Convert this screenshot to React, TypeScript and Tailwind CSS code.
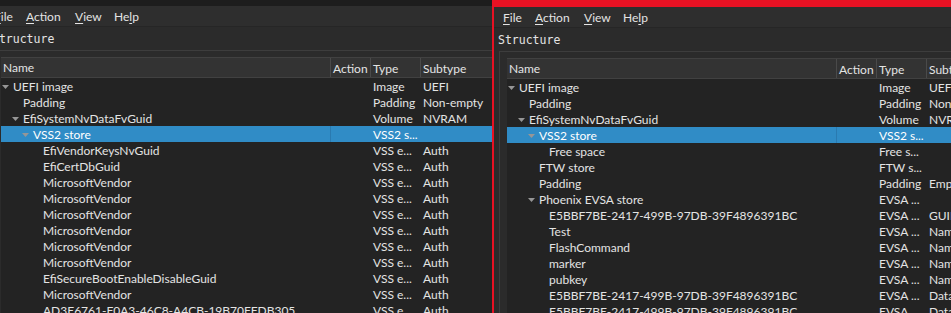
import React from 'react';

type Row = {
  level: number;
  open?: boolean;
  name: string;
  type: string;
  subtype: string;
  selected?: boolean;
};

const leftRows: Row[] = [
  { level: 0, open: true, name: 'UEFI image', type: 'Image', subtype: 'UEFI' },
  { level: 1, name: 'Padding', type: 'Padding', subtype: 'Non-empty' },
  { level: 1, open: true, name: 'EfiSystemNvDataFvGuid', type: 'Volume', subtype: 'NVRAM' },
  { level: 2, open: true, name: 'VSS2 store', type: 'VSS2 s...', subtype: '', selected: true },
  { level: 3, name: 'EfiVendorKeysNvGuid', type: 'VSS e...', subtype: 'Auth' },
  { level: 3, name: 'EfiCertDbGuid', type: 'VSS e...', subtype: 'Auth' },
  { level: 3, name: 'MicrosoftVendor', type: 'VSS e...', subtype: 'Auth' },
  { level: 3, name: 'MicrosoftVendor', type: 'VSS e...', subtype: 'Auth' },
  { level: 3, name: 'MicrosoftVendor', type: 'VSS e...', subtype: 'Auth' },
  { level: 3, name: 'MicrosoftVendor', type: 'VSS e...', subtype: 'Auth' },
  { level: 3, name: 'MicrosoftVendor', type: 'VSS e...', subtype: 'Auth' },
  { level: 3, name: 'MicrosoftVendor', type: 'VSS e...', subtype: 'Auth' },
  { level: 3, name: 'EfiSecureBootEnableDisableGuid', type: 'VSS e...', subtype: 'Auth' },
  { level: 3, name: 'MicrosoftVendor', type: 'VSS e...', subtype: 'Auth' },
  { level: 3, name: 'AD3E6761-F0A3-46C8-A4CB-19B70FFDB305', type: 'VSS e...', subtype: 'Auth' },
];

const rightRows: Row[] = [
  { level: 0, open: true, name: 'UEFI image', type: 'Image', subtype: 'UEFI' },
  { level: 1, name: 'Padding', type: 'Padding', subtype: 'Non-empty' },
  { level: 1, open: true, name: 'EfiSystemNvDataFvGuid', type: 'Volume', subtype: 'NVRAM' },
  { level: 2, open: true, name: 'VSS2 store', type: 'VSS2 s...', subtype: '', selected: true },
  { level: 3, name: 'Free space', type: 'Free s...', subtype: '' },
  { level: 2, name: 'FTW store', type: 'FTW s...', subtype: '' },
  { level: 2, name: 'Padding', type: 'Padding', subtype: 'Empty' },
  { level: 2, open: true, name: 'Phoenix EVSA store', type: 'EVSA ...', subtype: '' },
  { level: 3, name: 'E5BBF7BE-2417-499B-97DB-39F4896391BC', type: 'EVSA ...', subtype: 'GUID' },
  { level: 3, name: 'Test', type: 'EVSA ...', subtype: 'Name' },
  { level: 3, name: 'FlashCommand', type: 'EVSA ...', subtype: 'Name' },
  { level: 3, name: 'marker', type: 'EVSA ...', subtype: 'Name' },
  { level: 3, name: 'pubkey', type: 'EVSA ...', subtype: 'Name' },
  { level: 3, name: 'E5BBF7BE-2417-499B-97DB-39F4896391BC', type: 'EVSA ...', subtype: 'Data' },
  { level: 3, name: 'E5BBF7BE-2417-499B-97DB-39F4896391BC', type: 'EVSA ...', subtype: 'Data' },
];

const indent = ['w-[12px]', 'w-[22px]', 'w-[32px]', 'w-[42px]'];
const arrowPad = ['pl-[1px]', 'pl-[11px]', 'pl-[21px]', 'pl-[31px]'];

function Arrow() {
  return (
    <svg width="7" height="4" viewBox="0 0 7 4" className="block">
      <polygon points="0,0 7,0 3.5,4" fill="#969696" />
    </svg>
  );
}

function TreeRow({ row }: { row: Row }) {
  return (
    <div
      className={
        'flex h-[16px] items-center whitespace-nowrap pt-[2px] ' +
        (row.selected ? 'bg-[#308cc6] text-white' : 'text-[#e4e4e4]')
      }
    >
      <div className="flex w-[329px] shrink-0 items-center overflow-hidden">
        <div className={'flex shrink-0 items-center ' + indent[row.level] + ' ' + arrowPad[row.level]}>
          {row.open && <Arrow />}
        </div>
        <span>{row.name}</span>
      </div>
      <div className={'h-[16px] -mt-[2px] w-[40px] shrink-0 ' + (row.selected ? 'border-l border-[#2a7ab0]' : '')} />
      <div className="w-[50px] shrink-0 overflow-hidden pl-[3px]">{row.type}</div>
      <div className="flex-1 overflow-hidden pl-[3px]">{row.subtype}</div>
    </div>
  );
}

function Window({ rows, red, menuPad }: { rows: Row[]; red?: boolean; menuPad: string }) {
  return (
    <div className="flex h-full w-full flex-col bg-[#2b2b2b]">
      <div className={red ? 'h-[7px] shrink-0 bg-[#e81123]' : 'h-[6px] shrink-0 bg-[#1d1d1d]'} />
      <div className={'flex h-[21px] shrink-0 items-center border-b border-[#262626] bg-[#2e2e2e] pt-[2px] text-[12px] text-[#e4e4e4] ' + menuPad}>
        <span className="w-[32px]"><span className="underline underline-offset-2">F</span>ile</span>
        <span className="w-[49px]"><span className="underline underline-offset-2">A</span>ction</span>
        <span className="w-[39px]"><span className="underline underline-offset-2">V</span>iew</span>
        <span>He<span className="underline underline-offset-2">l</span>p</span>
      </div>
      <div className="flex h-[23px] shrink-0 items-center pl-[4px] pt-[3px] font-['DejaVu_Sans_Mono',monospace] text-[11.5px] text-[#e4e4e4]">
        Structure
      </div>
      <div className="ml-[5px] flex-1 border-l border-t border-[#3d3d3d] pl-[7px] pt-[6px]">
        <div className="h-full bg-[#232323] text-[12px]">
          <div className="flex h-[21px] items-center whitespace-nowrap border-y border-[#414141] bg-[#333333] text-[#e4e4e4]">
            <div className="w-[329px] shrink-0 pl-[2px] pt-[1px]">Name</div>
            <div className="h-full w-[40px] shrink-0 border-l border-[#4a4a4a] pl-[2px] pt-[1px] leading-[19px]">Action</div>
            <div className="h-full w-[50px] shrink-0 border-l border-[#4a4a4a] pl-[2px] pt-[1px] leading-[19px]">Type</div>
            <div className="h-full flex-1 border-l border-[#4a4a4a] pl-[2px] pt-[1px] leading-[19px]">Subtype</div>
          </div>
          {rows.map((r, i) => (
            <TreeRow key={i} row={r} />
          ))}
        </div>
      </div>
    </div>
  );
}

export default function App() {
  return (
    <div className="flex h-[313px] w-[951px] overflow-hidden bg-[#1d1d1d] font-['Lato',sans-serif]">
      <div className="h-full w-[492px] shrink-0 overflow-hidden">
        <div className="-ml-[12px] h-full w-[504px]">
          <Window rows={leftRows} menuPad="pl-[6px]" />
        </div>
      </div>
      <div className="h-full flex-1 overflow-hidden border-l-2 border-[#e81123]">
        <div className="h-full w-[520px]">
          <Window rows={rightRows} red menuPad="pl-[9px]" />
        </div>
      </div>
    </div>
  );
}
